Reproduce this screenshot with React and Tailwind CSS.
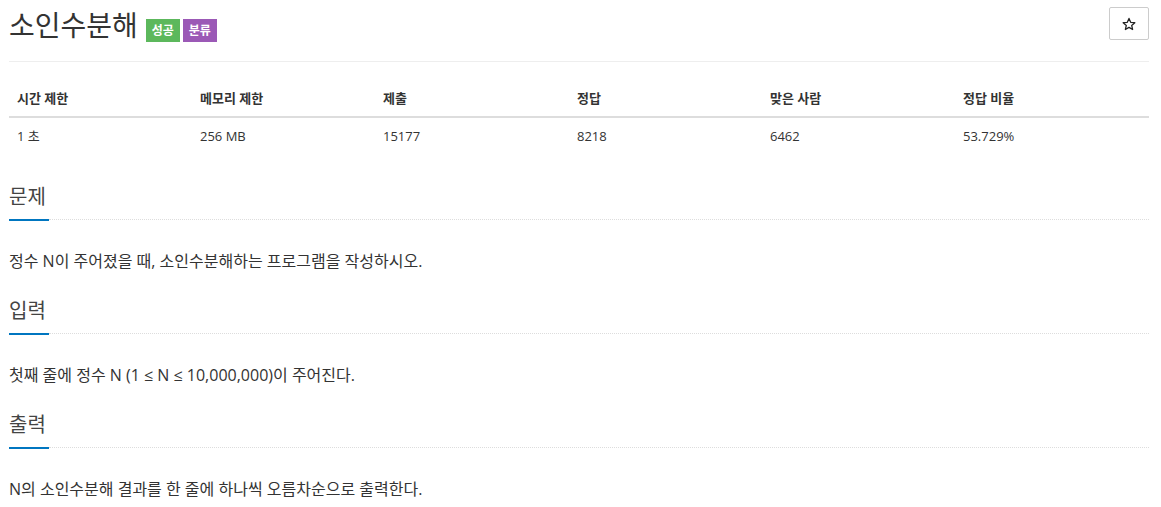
import React from 'react';

const stats = [
  { label: '시간 제한', value: '1 초' },
  { label: '메모리 제한', value: '256 MB' },
  { label: '제출', value: '15177' },
  { label: '정답', value: '8218' },
  { label: '맞은 사람', value: '6462' },
  { label: '정답 비율', value: '53.729%' },
];

const sections = [
  { title: '문제', body: '정수 N이 주어졌을 때, 소인수분해하는 프로그램을 작성하시오.' },
  { title: '입력', body: '첫째 줄에 정수 N (1 ≤ N ≤ 10,000,000)이 주어진다.' },
  { title: '출력', body: 'N의 소인수분해 결과를 한 줄에 하나씩 오름차순으로 출력한다.' },
];

const Section = ({ title, body, first }) => (
  <div className={first ? 'mt-[29px]' : 'mt-[24px]'}>
    {/* headline with blue underline + dotted rule */}
    <div className="flex items-end">
      <h2 className="w-[40px] shrink-0 border-b-2 border-[#0076c0] pb-[8px] text-[20px] leading-[28px] text-[#444] whitespace-nowrap">
        {title}
      </h2>
      <div className="flex-1 border-b border-dotted border-[#ddd] mb-[1px]" />
    </div>
    <p className="mt-[28px] text-[16px] leading-[24px] text-[#333]">{body}</p>
  </div>
);

const App = () => {
  return (
    <div
      className="min-h-screen bg-white"
      style={{ fontFamily: '"Open Sans", "Noto Sans CJK KR", sans-serif' }}
    >
      <div className="ml-[9px] w-[1140px]">
        {/* Page header */}
        <div className="flex justify-between items-start pt-[7px] pb-[18px] border-b border-[#eee]">
          <div className="flex items-end">
            <h1 className="text-[28px] leading-[36px] text-[#333]">소인수분해</h1>
            <div className="flex gap-[3px] ml-[8px] mb-[1px]">
              <span className="w-[34px] h-[23px] flex items-center justify-center bg-[#5cb85c] text-white text-[12px] font-bold">
                성공
              </span>
              <span className="w-[34px] h-[23px] flex items-center justify-center bg-[#9b59b6] text-white text-[12px] font-bold">
                분류
              </span>
            </div>
          </div>
          <button className="w-[40px] h-[33px] border border-[#ccc] rounded-[2px] bg-white flex items-center justify-center">
            <svg width="14" height="14" viewBox="0 0 24 24" fill="none" stroke="#222" strokeWidth="2.2" strokeLinejoin="round">
              <path d="M12 2.5l2.9 6.6 7.1.6-5.4 4.7 1.6 7-6.2-3.7-6.2 3.7 1.6-7L2 9.7l7.1-.6z" />
            </svg>
          </button>
        </div>

        {/* Stats table */}
        <div className="mt-[18px] text-[13px] text-[#333]">
          <div className="grid grid-cols-[183px_183px_194px_193px_193px_194px] border-b-2 border-[#ddd]">
            {stats.map((s) => (
              <div key={s.label} className="px-[8px] py-[8px] leading-[20px] font-bold">
                {s.label}
              </div>
            ))}
          </div>
          <div className="grid grid-cols-[183px_183px_194px_193px_193px_194px]">
            {stats.map((s) => (
              <div key={s.label} className="px-[8px] py-[8px] leading-[20px]">
                {s.value}
              </div>
            ))}
          </div>
        </div>

        {sections.map((s, i) => (
          <Section key={s.title} title={s.title} body={s.body} first={i === 0} />
        ))}
      </div>
    </div>
  );
};

export default App;
